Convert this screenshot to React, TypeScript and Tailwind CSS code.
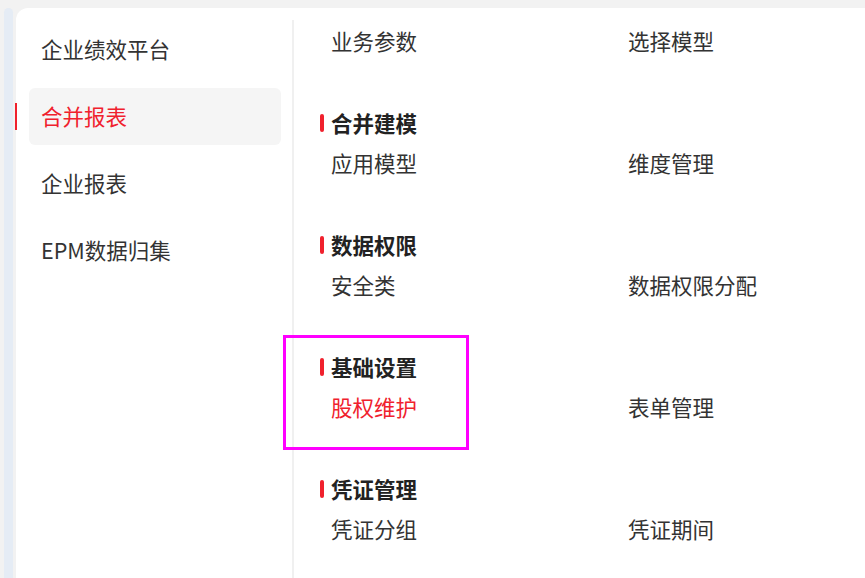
import React from 'react';

const sideItems = ['企业绩效平台', '合并报表', '企业报表', 'EPM数据归集'];

interface Section {
  title?: string;
  items: { label: string; active?: boolean }[];
}

const sections: Section[] = [
  { items: [{ label: '业务参数' }, { label: '选择模型' }] },
  { title: '合并建模', items: [{ label: '应用模型' }, { label: '维度管理' }] },
  { title: '数据权限', items: [{ label: '安全类' }, { label: '数据权限分配' }] },
  { title: '基础设置', items: [{ label: '股权维护', active: true }, { label: '表单管理' }] },
  { title: '凭证管理', items: [{ label: '凭证分组' }, { label: '凭证期间' }] },
];

export default function App() {
  return (
    <div
      className="relative w-[865px] h-[578px] overflow-hidden bg-[#f2f2f2] pt-2 flex"
      style={{ fontFamily: '"Noto Sans CJK SC", "Noto Sans", sans-serif' }}
    >
      {/* left rail */}
      <div className="shrink-0 ml-1 w-[9px] bg-[#e5ecf5] rounded-t-full" />

      <div className="ml-[3px] flex-1 min-w-0 bg-white rounded-tl-xl flex">
        {/* sidebar */}
        <div className="shrink-0 w-[276px] pt-[13px] flex flex-col gap-[10px]">
          {sideItems.map((s, i) => {
            const active = i === 1;
            return (
              <div
                key={s}
                className={`relative ml-[13px] w-[252px] h-[57px] rounded-md flex items-center px-3 text-[21.5px] ${
                  active ? 'bg-[#f5f5f5] text-[#f0212d]' : 'text-[#333333]'
                }`}
              >
                {active && <span className="absolute left-[-14px] top-[15px] w-[2px] h-[27px] bg-[#f0212d]" />}
                {s}
              </div>
            );
          })}
        </div>

        {/* divider */}
        <div className="shrink-0 mt-3 w-[2px] bg-[#f0f0f0]" />

        {/* content */}
        <div className="flex-1 min-w-0 pt-[13px] pl-[26px] flex flex-col gap-[42px]">
          {sections.map((sec, i) => (
            <div key={i} className="flex flex-col">
              {sec.title && (
                <div className="h-10 flex items-center">
                  <span className="shrink-0 w-[4px] h-[18px] rounded-full bg-[#f0212d] mr-[7px]" />
                  <span className="text-[21.5px] font-bold text-[#222222]">{sec.title}</span>
                </div>
              )}
              <div className="h-10 flex items-center pl-[11px]">
                {sec.items.map((it) => (
                  <div
                    key={it.label}
                    className={`shrink-0 w-[297px] text-[21.5px] ${it.active ? 'text-[#f0212d]' : 'text-[#333333]'}`}
                  >
                    {it.label}
                  </div>
                ))}
              </div>
            </div>
          ))}
        </div>
      </div>

      {/* highlight annotation */}
      <div className="absolute left-[283px] top-[335px] w-[186px] h-[115px] border-[3px] border-[#ff00ff]" />
    </div>
  );
}
